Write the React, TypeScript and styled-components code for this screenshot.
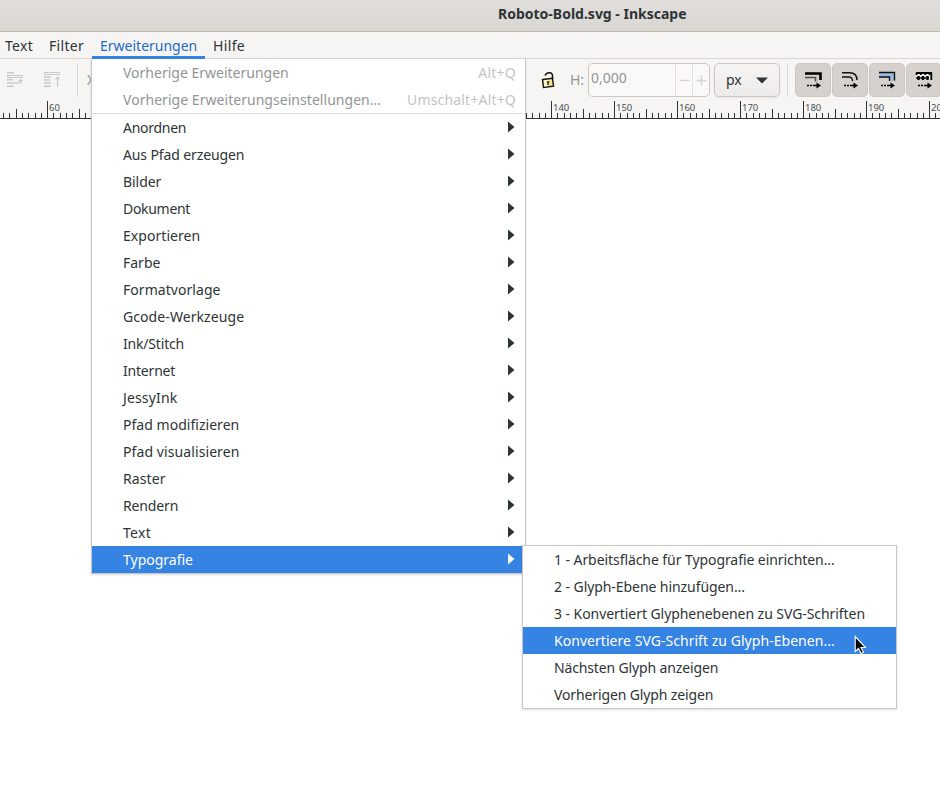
import React from 'react';
import styled, { createGlobalStyle } from 'styled-components';

const GlobalStyle = createGlobalStyle`
  *, *::before, *::after { box-sizing: border-box; }
  html, body { margin: 0; background: #fff; overflow: hidden; }
`;

const Window = styled.div`
  width: 940px;
  height: 805px;
  display: flex;
  flex-direction: column;
  overflow: hidden;
  background: #fff;
  color: #2e3436;
  font: 14px/20px 'Noto Sans', sans-serif;
  cursor: default;
`;

const TitleBar = styled.header`
  height: 32px;
  flex: none;
  padding: 4px 0 0 498px;
  background: linear-gradient(#e1dedb, #dad6d2);
  border-bottom: 1px solid #bfb8b1;
  font-weight: 700;
  white-space: nowrap;
`;

const MenuBar = styled.nav`
  height: 27px;
  flex: none;
  display: flex;
  background: #f6f5f4;
  border-bottom: 1px solid #dad6d2;
`;

const MenuBarItem = styled.div<{ $width: number; $active?: boolean; $tracking: number }>`
  position: relative;
  width: ${(p) => p.$width}px;
  height: 27px;
  padding: 4px 0 0 8px;
  letter-spacing: ${(p) => p.$tracking}px;
  color: ${(p) => (p.$active ? '#1b6acb' : '#2e3436')};
  box-shadow: ${(p) => (p.$active ? 'inset 0 -3px #3584e4' : 'none')};

  &:first-child { padding-left: 5px; }
`;

const Menu = styled.div<{ $submenu?: boolean }>`
  position: absolute;
  z-index: ${(p) => (p.$submenu ? 3 : 2)};
  left: ${(p) => (p.$submenu ? 430 : -1)}px;
  top: ${(p) => (p.$submenu ? -1 : 27)}px;
  width: ${(p) => (p.$submenu ? 375 : 435)}px;
  background: #fff;
  border: 1px solid #c9c6c3;
  border-top-width: ${(p) => (p.$submenu ? 1 : 0)}px;
  box-shadow: 0 1px 2px rgba(0, 0, 0, 0.13);
  color: #2e3436;
`;

const MenuRow = styled.div<{ $tracking: number; $selected?: boolean; $disabled?: boolean }>`
  position: relative;
  height: 27px;
  padding: 0 8px 0 31px;
  display: flex;
  align-items: center;
  justify-content: space-between;
  white-space: nowrap;
  letter-spacing: ${(p) => p.$tracking}px;
  background: ${(p) => (p.$selected ? '#3584e4' : 'transparent')};
  color: ${(p) => (p.$selected ? '#fff' : p.$disabled ? '#929595' : '#2e3436')};
`;

const Shortcut = styled.span<{ $tracking: number }>`
  color: #c3c5c5;
  margin-right: 1px;
  letter-spacing: ${(p) => p.$tracking}px;
`;

const MenuSeparator = styled.div`
  height: 1px;
  background: #e1dfdd;
`;

const Arrow = styled.svg`
  width: 7px;
  height: 12px;
  margin-right: 2px;
  margin-top: -2px;
  fill: currentColor;
`;

const Toolbar = styled.div`
  height: 42px;
  flex: none;
  padding: 4px 0 4px 6px;
  display: flex;
  align-items: center;
  background: #f6f5f4;
`;

const AlignGroup = styled.div`
  width: 535px;
  flex: none;
  display: flex;
  align-items: center;
  color: #929595;
`;

const ToolIcon = styled.svg`
  width: 18px;
  height: 18px;
  margin-right: 19px;
  flex: none;

  & + & { margin-right: 16px; }
`;

const Divider = styled.i`
  width: 1px;
  height: 34px;
  flex: none;
  background: #dad6d2;
`;

const AxisLabel = styled.span`
  margin-left: 9px;
`;

const LockIcon = styled.svg`
  width: 14px;
  height: 18px;
  flex: none;
`;

const FieldLabel = styled.span`
  width: 33px;
  flex: none;
  padding-left: 15px;
  color: #929595;
`;

const SpinField = styled.div`
  width: 122px;
  height: 34px;
  flex: none;
  display: grid;
  grid-template-columns: 86px 17px 17px;
  border: 1px solid #cdc7c2;
  border-radius: 5px;
  background: #faf9f8;
  color: #929595;
`;

const SpinValue = styled.span`
  padding: 4px 0 0 2px;
`;

const SpinButton = styled.span`
  display: grid;
  place-items: center;
  border-left: 1px solid #e3e0dd;
`;

const SpinGlyph = styled.svg`
  width: 11px;
  height: 11px;
  stroke: #d5d4d2;
  stroke-width: 1.4;
`;

const UnitSelect = styled.div`
  width: 66px;
  height: 34px;
  flex: none;
  margin: 0 7px 0 4px;
  padding: 0 11px;
  display: flex;
  align-items: center;
  justify-content: space-between;
  border: 1px solid #cdc7c2;
  border-radius: 5px;
  background: linear-gradient(#f6f5f4, #edebe9);
  box-shadow: 0 1px 2px rgba(0, 0, 0, 0.08);
`;

const UnitArrow = styled.svg`
  width: 12px;
  height: 7px;
`;

const ToggleGroup = styled.div`
  display: flex;
  flex: none;
  gap: 1px;
  margin-left: 7px;
`;

const Toggle = styled.div`
  width: 36px;
  height: 34px;
  flex: none;
  display: grid;
  place-items: center;
  border: 1px solid #cdc7c2;
  border-radius: 5px;
  background: #d6d1cd;
`;

const ToggleIcon = styled.svg`
  width: 18px;
  height: 18px;
`;

const Ruler = styled.svg`
  width: 940px;
  height: 18px;
  flex: none;
  display: block;
  background: #f6f5f4;
  fill: #4b5052;
  font: 9.5px 'Noto Sans', sans-serif;
`;

const Pointer = styled.svg`
  position: absolute;
  right: 28px;
  top: 8px;
  width: 14px;
  height: 20px;
`;

const categories: [string, number][] = [
  ['Anordnen', -0.27], ['Aus Pfad erzeugen', -0.12], ['Bilder', -0.05], ['Dokument', -0.3],
  ['Exportieren', 0.05], ['Farbe', 0], ['Formatvorlage', 0.05], ['Gcode-Werkzeuge', 0.08],
  ['Ink/Stitch', -0.18], ['Internet', -0.2], ['JessyInk', 0.15], ['Pfad modifizieren', 0.03],
  ['Pfad visualisieren', 0.09], ['Raster', 0.1], ['Rendern', -0.15], ['Text', 0.3], ['Typografie', 0],
];

const typography: [string, number][] = [
  ['1 - Arbeitsfläche für Typografie einrichten...', -0.07],
  ['2 - Glyph-Ebene hinzufügen...', -0.07],
  ['3 - Konvertiert Glyphenebenen zu SVG-Schriften', -0.06],
  ['Konvertiere SVG-Schrift zu Glyph-Ebenen...', 0.04],
  ['Nächsten Glyph anzeigen', -0.14],
  ['Vorherigen Glyph zeigen', -0.13],
];

function TypographySubmenu() {
  return (
    <Menu $submenu>
      {typography.map(([label, tracking], i) => (
        <MenuRow key={label} $tracking={tracking} $selected={i === 3}>
          {label}
          {i === 3 && (
            <Pointer viewBox="0 0 14 20">
              <path d="M1.200 1.500v15l3.300-3 2.500 5 2.500-1.200-2.500-4.800h4.500z" fill="#000" stroke="#fff" strokeWidth="1.100" />
            </Pointer>
          )}
        </MenuRow>
      ))}
    </Menu>
  );
}

function ExtensionsMenu() {
  return (
    <Menu>
      <MenuRow $disabled $tracking={0}>
        Vorherige Erweiterungen<Shortcut $tracking={0.25}>Alt+Q</Shortcut>
      </MenuRow>
      <MenuRow $disabled $tracking={0.04}>
        Vorherige Erweiterungseinstellungen…<Shortcut $tracking={0.18}>Umschalt+Alt+Q</Shortcut>
      </MenuRow>
      <MenuSeparator />
      {categories.map(([label, tracking]) => (
        <MenuRow key={label} $tracking={tracking} $selected={label === 'Typografie'}>
          {label}
          <Arrow viewBox="0 0 7 12"><path d="M0 .5 6.500 6 0 11.500z" /></Arrow>
          {label === 'Typografie' && <TypographySubmenu />}
        </MenuRow>
      ))}
    </Menu>
  );
}

const MoveArrow = () => (
  <>
    <path d="M3 14.500h2m1 0h2m1 0h5" stroke="#000" strokeWidth="1.600" />
    <path d="m12.500 11.500 4.500 3-4.500 3z" fill="#000" />
  </>
);

function RulerScale() {
  return (
    <Ruler>
      {Array.from({ length: 150 }, (_, i) => {
        const step = i - 7;
        const x = Math.floor(47.6 + step * 6.3) + 0.5;
        const top = step % 10 === 0 ? 0 : step % 5 === 0 ? 8 : 12;
        return <path key={step} d={`M${x} ${top}V18`} stroke="#2e3436" />;
      })}
      {[60, 140, 150, 160, 170, 180, 190, 200].map((n) => (
        <text key={n} x={Math.floor(47.6 + (n - 60) * 6.3) + 2} y="10">{n}</text>
      ))}
      <path d="M0 17.500h940" stroke="#2e3436" />
    </Ruler>
  );
}

export default function App() {
  return (
    <>
      <GlobalStyle />
      <Window>
        <TitleBar>Roboto-Bold.svg - Inkscape</TitleBar>
        <MenuBar>
          <MenuBarItem $width={41} $tracking={0.3}>Text</MenuBarItem>
          <MenuBarItem $width={51} $tracking={0.3}>Filter</MenuBarItem>
          <MenuBarItem $width={113} $tracking={0} $active>
            Erweiterungen
            <ExtensionsMenu />
          </MenuBarItem>
          <MenuBarItem $width={48} $tracking={0.35}>Hilfe</MenuBarItem>
        </MenuBar>
        <Toolbar>
          <AlignGroup>
            <ToolIcon viewBox="0 0 18 18" fill="none" stroke="#c9c9c8" strokeWidth="1.600">
              <path d="M1 1.800h7M1 8.800h6M1 12h10M1 15.300h7" />
              <path d="M1.500 4.500h15v2h-15z" strokeWidth="1" />
              <path d="M11 12h3.500V8.500m-2 2 2-2 2 2" strokeWidth="1.200" />
            </ToolIcon>
            <ToolIcon viewBox="0 0 18 18" fill="none" stroke="#c9c9c8" strokeWidth="1.600">
              <path d="M1 6h7M1 9h6M1 12h7M1 15.300h7" />
              <path d="M1.500 1.500h15v2h-15z" strokeWidth="1" />
              <path d="M14.500 16V6m-2 2.500 2-2.500 2 2.500" strokeWidth="1.200" />
            </ToolIcon>
            <Divider />
            <AxisLabel>X:</AxisLabel>
          </AlignGroup>
          <LockIcon viewBox="0 0 14 18">
            <path d="M4 4.500C6 .5 12 1 11.500 5v3" fill="none" stroke="#111" strokeWidth="1.500" />
            <path d="m1.500 8.500 10-1.200 1 7.800-10 1.300z" fill="#f8e68c" stroke="#111" strokeWidth="1.400" />
            <path d="m3 9.500 3-.4.500 6-2.800.3z" fill="#fff8d5" />
            <path d="m6.800 10.500.4 3.500M5.800 11.200l2.600-.3" stroke="#111" strokeWidth="1.300" />
          </LockIcon>
          <FieldLabel>H:</FieldLabel>
          <SpinField>
            <SpinValue>0,000</SpinValue>
            <SpinButton><SpinGlyph viewBox="0 0 11 11"><path d="M.5 5.500h10" /></SpinGlyph></SpinButton>
            <SpinButton><SpinGlyph viewBox="0 0 11 11"><path d="M.5 5.500h10M5.500 .5v10" /></SpinGlyph></SpinButton>
          </SpinField>
          <UnitSelect>
            px
            <UnitArrow viewBox="0 0 12 7"><path d="M0 .5h12l-6 6z" fill="#2e3436" /></UnitArrow>
          </UnitSelect>
          <Divider />
          <ToggleGroup>
            <Toggle>
              <ToggleIcon viewBox="0 0 18 18" fill="none">
                <path d="M1 2.500h15.500V9" stroke="#000" strokeWidth="2.600" />
                <path d="M1 6.500h10.500v4" stroke="#554f4c" strokeWidth="1.600" />
                <MoveArrow />
              </ToggleIcon>
            </Toggle>
            <Toggle>
              <ToggleIcon viewBox="0 0 18 18" fill="none">
                <path d="M1 1.700h7.500c5 0 7.500 3 7.500 7.300M1 6h6.500c3 0 4 2 4 4" stroke="#111" strokeWidth="1.400" />
                <MoveArrow />
              </ToggleIcon>
            </Toggle>
            <Toggle>
              <ToggleIcon viewBox="0 0 18 18" fill="none">
                <path d="M1 1.500h15.500V10h-4V6.500H1z" fill="#9bbce2" />
                <path d="M1 1.500h15.500V9.500M1 6h10.500v4" stroke="#111" strokeWidth="1.400" />
                <MoveArrow />
              </ToggleIcon>
            </Toggle>
            <Toggle>
              <ToggleIcon viewBox="0 0 18 18" fill="none">
                <path d="M1 2h16v6.500H1z" fill="#eee" />
                <path d="M1 2h16M16.300 2v7" stroke="#000" strokeWidth="1.800" />
                <path d="M1 7h13" stroke="#000" strokeWidth="1.400" />
                <path d="M3.500 5v4m4.500-4v4m4.500-4v4" stroke="#000" strokeWidth="2.400" />
                <path d="M5.800 2v2m4.500-2v2m4.200-2v2M1.500 2v2" stroke="#000" strokeWidth="1.800" />
                <MoveArrow />
              </ToggleIcon>
            </Toggle>
          </ToggleGroup>
        </Toolbar>
        <RulerScale />
      </Window>
    </>
  );
}
